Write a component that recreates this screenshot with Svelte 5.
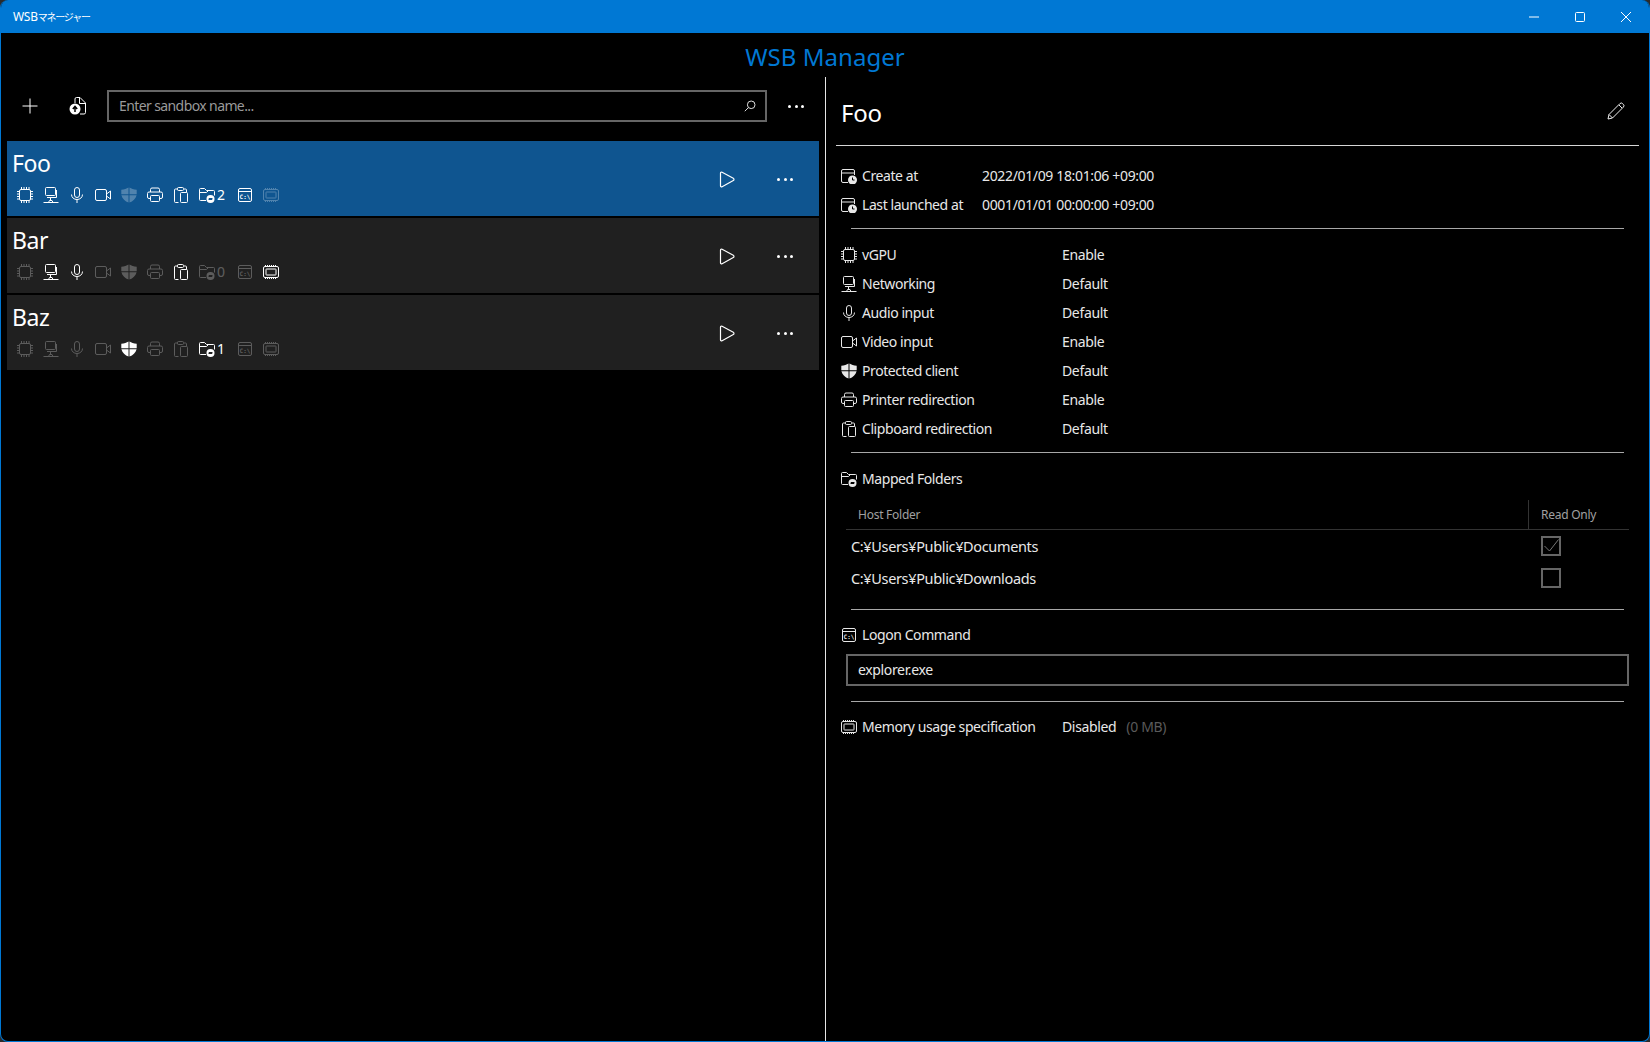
<script>
  const settings = [
    ['chip', 'vGPU', 'Enable'],
    ['net', 'Networking', 'Default'],
    ['mic', 'Audio input', 'Default'],
    ['video', 'Video input', 'Enable'],
    ['shield', 'Protected client', 'Default'],
    ['printer', 'Printer redirection', 'Enable'],
    ['clip', 'Clipboard redirection', 'Default']
  ];
  const sandboxes = [
    { name: 'Foo', selected: true, count: 2, on: ['chip','net','mic','video','printer','clip','folder','cmd'] },
    { name: 'Bar', selected: false, count: 0, on: ['net','mic','clip','memory'] },
    { name: 'Baz', selected: false, count: 1, on: ['shield','folder'] }
  ];
  const order = ['chip','net','mic','video','shield','printer','clip','folder','cmd','memory'];
</script>

{#snippet icon(name)}
  <svg class="icon" viewBox="0 0 16 16" fill="none" stroke="currentColor" stroke-width="1" aria-hidden="true">
    {#if name === 'chip'}
      <rect x="2.500" y="2.500" width="11" height="11" rx="1.500" />
      <path d="M4.500 0v2M7 0v2M9.500 0v2M12 0v2M4.500 14v2M7 14v2M9.500 14v2M12 14v2M0 4.500h2M0 7h2M0 9.500h2M0 12h2M14 4.500h2M14 7h2M14 9.500h2M14 12h2" />
    {:else if name === 'net'}
      <rect x="2.500" y="0.500" width="10" height="8" rx="1" />
      <path d="M4 10.500h9.500V3M7.500 11v2M0.500 15.500h15M6.500 13.500h2.500l1 2h-4.500z" />
    {:else if name === 'mic'}
      <rect x="5.500" y="0.500" width="5" height="10" rx="2.500" />
      <path d="M2.500 7.500c0 3 2.500 5 5.500 5s5.500-2 5.500-5M8 12.500v3.500" />
    {:else if name === 'video'}
      <rect x="0.500" y="2.500" width="11" height="11" rx="1.500" />
      <path d="M11.500 7l4-3v8l-4-3" />
    {:else if name === 'shield'}
      <path fill="currentColor" stroke="none" d="M7.500 0.500c-1.800 1.300-4.200 2-7.200 2.200v4.500h7.200zM8.500 0.500c1.800 1.300 4.200 2 7.200 2.200v4.500h-7.200zM0.400 8.200h7.100v7.300c-3.300-1.300-6.200-3.500-7.100-7.300zM8.500 8.200h7.100c-.9 3.800-3.800 6-7.100 7.300z" />
    {:else if name === 'printer'}
      <path d="M3.500 5V2.500a1.500 1.500 0 0 1 1.500-1.500h6a1.500 1.500 0 0 1 1.500 1.500V5M3.500 11.500h-1.500a1.500 1.500 0 0 1-1.500-1.500V6.500A1.500 1.500 0 0 1 2 5h12a1.500 1.500 0 0 1 1.500 1.500V10a1.500 1.500 0 0 1-1.500 1.500h-1.500" />
      <rect x="3.500" y="8.500" width="9" height="6" rx="1" />
    {:else if name === 'clip'}
      <path d="M5.500 15.500h-3a1 1 0 0 1-1-1V3a1 1 0 0 1 1-1h2.500M11 2h1.500a1 1 0 0 1 1 1v2.500" />
      <rect x="4.500" y="0.500" width="6" height="3" rx="1" />
      <rect x="7.500" y="5.500" width="7" height="10" rx="1" />
    {:else if name === 'folder'}
      <path d="M7 13.500H1.500a1 1 0 0 1-1-1v-10a1 1 0 0 1 1-1h4l2 2h7a1 1 0 0 1 1 1v4" />
      <path d="M.5 5.500h7l2-2" />
      <circle cx="11.500" cy="12" r="4" fill="currentColor" stroke="none" />
      <path d="M9.500 12.500h3.500l-1-1M13.500 11.500h-3.500l1 1" stroke="var(--hole, #000)" />
    {:else if name === 'cmd'}
      <rect x="1.500" y="1.500" width="13" height="13" rx="1.500" />
      <path d="M1.500 4.500h13" />
      <text x="8" y="11.700" text-anchor="middle" class="cmdtext" fill="currentColor" stroke="none">C:\</text>
    {:else if name === 'memory'}
      <rect x="0.500" y="2.500" width="15" height="11" rx="1.500" />
      <rect x="3" y="5" width="10" height="6" rx="0.500" />
      <path d="M2 1.500h12M2 14.500h12" stroke-dasharray="1 1" />
    {:else if name === 'clock'}
      <path d="M7 14.500H2a1.500 1.500 0 0 1-1.500-1.500V3A1.500 1.500 0 0 1 2 1.500h10A1.500 1.500 0 0 1 13.500 3v4M.5 5h13" />
      <circle cx="11.500" cy="12" r="4.500" fill="currentColor" stroke="none" />
      <path d="M11.500 9.500V12h2" stroke="#000" />
    {/if}
  </svg>
{/snippet}

{#snippet dots()}
  <span class="dots"><i></i><i></i><i></i></span>
{/snippet}

<div class="window">
  <header class="titlebar">
    <span class="apptitle">WSB<span class="kana">マネージャー</span></span>
    <div class="caption">
      <svg viewBox="0 0 10 10" class="cap"><path d="M0 5h10" /></svg>
      <svg viewBox="0 0 10 10" class="cap"><rect x=".5" y=".5" width="9" height="9" rx="1" /></svg>
      <svg viewBox="0 0 10 10" class="cap"><path d="M0 0l10 10M10 0L0 10" /></svg>
    </div>
  </header>
  <h1 class="brand">WSB Manager</h1>
  <main class="panes">
    <section class="left">
      <div class="toolbar">
        <button class="tool plus" aria-label="Add">
          <svg viewBox="0 0 16 16" class="ic16"><path d="M8 .5v15M.5 8h15" /></svg>
        </button>
        <button class="tool open" aria-label="Open">
          <svg viewBox="0 0 18 18" class="ic18">
            <path d="M6 6V2a1.500 1.500 0 0 1 1.500-1.500H11l5.500 5.500v9.500A1.500 1.500 0 0 1 15 17h-4M10.500 .5V6.500h6" />
            <circle cx="6" cy="12" r="5.500" fill="#fff" stroke="none" />
            <path d="M6 15V10M3.800 12L6 9.500 8.200 12" stroke="#000" stroke-width="1.500" />
          </svg>
        </button>
        <div class="search">
          <span class="ph">Enter sandbox name...</span>
          <svg viewBox="0 0 12 12" class="glass"><circle cx="7.200" cy="4.800" r="3.800" /><path d="M4.500 7.500L.8 11.200" /></svg>
        </div>
        <div class="tbmore">{@render dots()}</div>
      </div>
      <div class="list">
        {#each sandboxes as s}
          <article class="card" class:selected={s.selected}>
            <div class="info">
              <div class="name">{s.name}</div>
              <div class="flags">
                {#each order as f}
                  <span class="flag" class:off={!s.on.includes(f)} class:wide={f === 'folder'}>
                    {@render icon(f)}
                    {#if f === 'folder'}<span class="count">{s.count}</span>{/if}
                  </span>
                {/each}
              </div>
            </div>
            <svg viewBox="0 0 16 17" class="play"><path d="M1.500 2.200c0-1 .8-1.400 1.600-1L14.300 7.300c.9.500.9 1.700 0 2.200L3.100 15.800c-.8.400-1.600 0-1.600-1z" /></svg>
            <div class="cardmore">{@render dots()}</div>
          </article>
        {/each}
      </div>
    </section>
    <section class="right">
      <div class="dhead">
        <h2>Foo</h2>
        <svg viewBox="0 0 18 18" class="pencil"><path d="M1 17l1-4.500L12.800 1.700a2 2 0 0 1 2.900 0l.6.600a2 2 0 0 1 0 2.900L5.500 16zM2 12.500L5.500 16M12 3l3 3" /></svg>
      </div>
      <div class="group dates">
        <div class="row datecols"><span class="lab">{@render icon('clock')}Create at</span><span>2022/01/09 18:01:06 +09:00</span></div>
        <div class="row datecols"><span class="lab">{@render icon('clock')}Last launched at</span><span>0001/01/01 00:00:00 +09:00</span></div>
      </div>
      <hr />
      <div class="group">
        {#each settings as [ic, label, val]}
          <div class="row cols"><span class="lab">{@render icon(ic)}{label}</span><span>{val}</span></div>
        {/each}
      </div>
      <hr class="h2" />
      <div class="row lab mapped">{@render icon('folder')}Mapped Folders</div>
      <div class="table">
        <div class="thead"><span class="th1">Host Folder</span><span class="th2">Read Only</span></div>
        <div class="trow"><span>C:¥Users¥Public¥Documents</span>
          <span class="check"><svg viewBox="0 0 20 20"><path d="M3.500 10l5 5L17.500 3.500" /></svg></span></div>
        <div class="trow"><span>C:¥Users¥Public¥Downloads</span><span class="check"></span></div>
      </div>
      <hr class="h3" />
      <div class="row lab logon">{@render icon('cmd')}Logon Command</div>
      <div class="input">explorer.exe</div>
      <hr class="h4" />
      <div class="row cols mem"><span class="lab">{@render icon('memory')}Memory usage specification</span><span>Disabled<span class="mb">(0 MB)</span></span></div>
    </section>
  </main>
</div>

<style>
  :global(body) { margin: 0; background: #2b2b2b; }
  * { box-sizing: border-box; }
  .window {
    width: 1650px; height: 1042px; background: #000; color: #e8e8e8;
    border: 1px solid #0078d4; border-top: 0; border-radius: 8px; overflow: hidden;
    display: flex; flex-direction: column;
    font-family: "Noto Sans", "Noto Sans CJK JP", sans-serif; font-size: 14px;
    letter-spacing: -0.35px;
  }
  .titlebar {
    height: 33px; flex: none; background: #0078d4; color: #fff; display: flex; align-items: center;
    justify-content: space-between; padding: 0 19px 0 13px; margin: 0 -1px;
  }
  .apptitle { font-size: 12px; letter-spacing: -0.3px; }
  .kana { font-size: 10px; letter-spacing: -1.200px; }
  .caption { display: flex; gap: 36px; align-items: center; }
  .cap { width: 10px; height: 10px; fill: none; stroke: #fff; stroke-width: 1; }
  .brand { margin: 0; height: 44px; flex: none; text-align: center; font-weight: 400; font-size: 24px; line-height: 47px; color: #0078d4; letter-spacing: 0.05px; }
  .panes { flex: 1; display: flex; min-height: 0; }
  .left { width: 824px; flex: none; padding: 13px 6px 0 6px; }
  .right { flex: 1; border-left: 1px solid #e6e6e6; padding: 0 10px 0 10px; }
  .toolbar { display: flex; align-items: center; height: 32px; margin-bottom: 19px; }
  .tool { background: none; border: 0; padding: 0; color: #fff; display: flex; margin-top: -1px; }
  .plus { margin-left: 15px; }
  .open { margin-left: 31px; }
  .ic16 { width: 16px; height: 16px; fill: none; stroke: #fff; stroke-width: 1; }
  .ic18 { width: 18px; height: 18px; fill: none; stroke: #fff; stroke-width: 1; }
  .search {
    margin-left: 20px; width: 660px; height: 32px; border: 2px solid #666; display: flex; align-items: center;
    justify-content: space-between; padding: 0 9px 0 10px; color: #9a9a9a;
  }
  .ph { letter-spacing: -0.6px; margin-top: -2px; }
  .glass { width: 12px; height: 12px; fill: none; stroke: #ddd; stroke-width: 1; }
  .tbmore { margin-left: 21px; display: flex; }
  .dots { display: inline-flex; gap: 3.500px; }
  .dots i { width: 3px; height: 3px; border-radius: 50%; background: #fff; }
  .list { display: flex; flex-direction: column; gap: 2px; }
  .card { height: 75px; background: #202020; display: flex; align-items: center; padding: 0 0 0 5px; }
  .card.selected { background: #0f5590; --hole: #0f5590; }
  .info { flex: 1; padding-top: 1px; }
  .name { font-size: 23px; line-height: 32px; color: #fff; letter-spacing: -0.4px; height: 32px; margin-top: -8px; }
  .flags { display: flex; gap: 10px; margin: 8px 0 0 5px; color: #fff; --hole: #202020; }
  .selected .flags { --hole: #0f5590; }
  .flag { display: flex; align-items: center; gap: 3px; position: relative; }
  .flag.off { opacity: .27; }
  .icon { width: 16px; height: 16px; flex: none; display: block; }
  .cmdtext { font-family: "DejaVu Sans Mono", monospace; font-size: 6px; font-weight: 700; letter-spacing: 0; }
  .count { font-size: 14px; line-height: 16px; width: 11px; margin-left: -1px; letter-spacing: 0; }
  .wide { margin-right: -1.500px; }
  .play { width: 16px; height: 17px; fill: none; stroke: #fff; stroke-width: 1.200; margin: 1px 42px 0 0; }
  .cardmore { width: 42px; display: flex; margin-top: 1px; }
  .dhead { height: 69px; border-bottom: 1px solid #d6d6d6; display: flex; justify-content: space-between; align-items: center; padding: 0 14px 0 5px; }
  h2 { font-weight: 400; font-size: 24px; margin: 3px 0 0; color: #fff; letter-spacing: -0.2px; }
  .pencil { width: 18px; height: 18px; fill: none; stroke: #f0f0f0; stroke-width: 1; margin-top: 0; }
  .dates { margin-top: 15px; }
  .row { height: 29px; display: flex; align-items: center; }
  .lab { display: flex; align-items: center; gap: 5px; margin-left: 5px; letter-spacing: -0.42px; }
  .cols { display: grid; grid-template-columns: 226px 1fr; }
  .datecols { display: grid; grid-template-columns: 146px 1fr; }
  hr { border: 0; height: 1px; background: #a8a8a8; margin: 9px 15px 11px 15px; }
  hr.h2 { margin-top: 9px; margin-bottom: 11px; }
  .table { margin: 7px 0 0 10px; width: 783px; }
  .thead { height: 30px; border-bottom: 1px solid #333; display: flex; align-items: center; color: #a0a0a0; font-size: 12px; padding-left: 12px; letter-spacing: -0.25px; }
  .th1 { width: 670px; }
  .th2 { height: 100%; border-left: 1px solid #333; padding-left: 12px; display: flex; align-items: center; flex: 1; }
  .trow { height: 32px; display: flex; align-items: center; justify-content: space-between; padding: 0 68px 0 5px; font-size: 14.500px; }
  .check { width: 20px; height: 20px; border: 2px solid #666; display: block; position: relative; }
  .check svg { position: absolute; left: -2px; top: -2px; width: 20px; height: 20px; fill: none; stroke: #777; stroke-width: 1; }
  hr.h3 { margin-top: 15px; margin-bottom: 10px; }
  .input { margin: 5px 0 0 10px; width: 783px; height: 32px; border: 2px solid #666; display: flex; align-items: center; padding: 0 0 2px 10px; color: #e8e8e8; }
  hr.h4 { margin-top: 15px; margin-bottom: 10px; }
  .mb { color: #5a5a5a; margin-left: 10px; }
</style>
